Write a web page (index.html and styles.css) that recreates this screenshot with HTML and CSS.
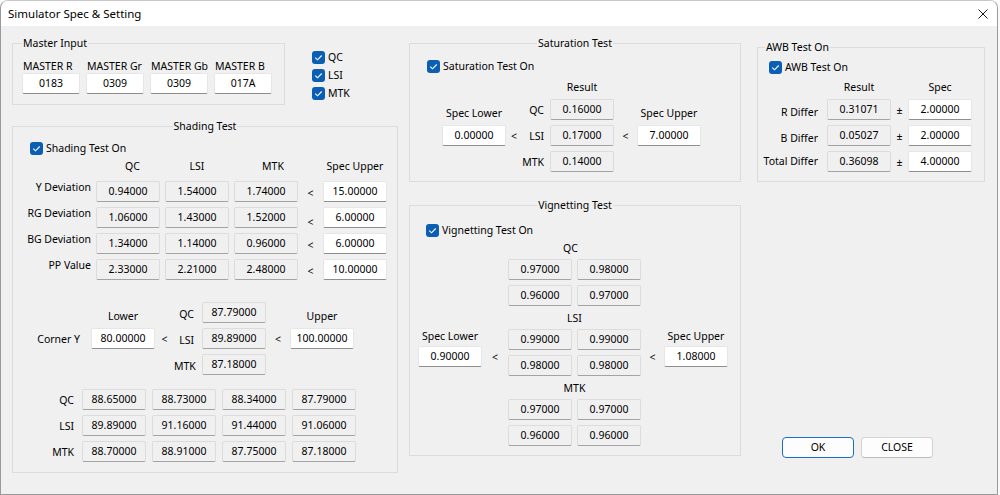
FILE: index.html
```html
<!DOCTYPE html>
<html>
<head>
<meta charset="utf-8">
<title>Simulator Spec &amp; Setting</title>
<link rel="stylesheet" href="styles.css">
</head>
<body>
<div class="window">
  <div class="titlebar">
    <span class="title">Simulator Spec &amp; Setting</span>
    <svg class="close" width="10" height="10" viewBox="0 0 10 10"><path d="M0.5 0.5 L9.5 9.5 M9.5 0.5 L0.5 9.5" stroke="#1b1b1b" stroke-width="1" fill="none"/></svg>
  </div>
  <div class="main">
    <div class="col-left">
      <div class="top-row">
        <fieldset class="group master">
          <legend>Master Input</legend>
          <div class="master-grid">
            <div class="mcol"><span class="mlabel">MASTER R</span><div class="fld edit">0183</div></div>
            <div class="mcol"><span class="mlabel">MASTER Gr</span><div class="fld edit">0309</div></div>
            <div class="mcol"><span class="mlabel">MASTER Gb</span><div class="fld edit">0309</div></div>
            <div class="mcol"><span class="mlabel">MASTER B</span><div class="fld edit">017A</div></div>
          </div>
        </fieldset>
        <div class="checks">
          <label class="chk"><svg class="cb" width="13" height="13" viewBox="0 0 13 13"><rect width="13" height="13" rx="3" fill="#0a5fb4"/><path d="M3.3 6.7 L5.5 8.8 L9.7 4.5" fill="none" stroke="#fff" stroke-width="1.1"/></svg><span>QC</span></label>
          <label class="chk"><svg class="cb" width="13" height="13" viewBox="0 0 13 13"><rect width="13" height="13" rx="3" fill="#0a5fb4"/><path d="M3.3 6.7 L5.5 8.8 L9.7 4.5" fill="none" stroke="#fff" stroke-width="1.1"/></svg><span>LSI</span></label>
          <label class="chk"><svg class="cb" width="13" height="13" viewBox="0 0 13 13"><rect width="13" height="13" rx="3" fill="#0a5fb4"/><path d="M3.3 6.7 L5.5 8.8 L9.7 4.5" fill="none" stroke="#fff" stroke-width="1.1"/></svg><span>MTK</span></label>
        </div>
      </div>

      <fieldset class="group shading">
        <legend class="center">Shading Test</legend>
        <label class="chk"><svg class="cb" width="13" height="13" viewBox="0 0 13 13"><rect width="13" height="13" rx="3" fill="#0a5fb4"/><path d="M3.3 6.7 L5.5 8.8 L9.7 4.5" fill="none" stroke="#fff" stroke-width="1.1"/></svg><span>Shading Test On</span></label>
        <div class="sh-grid">
          <div></div><div class="hd hd-qc">QC</div><div class="hd">LSI</div><div class="hd hd-mtk">MTK</div><div></div><div class="hd">Spec Upper</div>
          <div class="rl">Y Deviation</div><div class="fld ro">0.94000</div><div class="fld ro">1.54000</div><div class="fld ro">1.74000</div><div class="lt">&lt;</div><div class="fld edit">15.00000</div>
          <div class="rl">RG Deviation</div><div class="fld ro">1.06000</div><div class="fld ro">1.43000</div><div class="fld ro">1.52000</div><div class="lt low">&lt;</div><div class="fld edit">6.00000</div>
          <div class="rl">BG Deviation</div><div class="fld ro">1.34000</div><div class="fld ro">1.14000</div><div class="fld ro">0.96000</div><div class="lt">&lt;</div><div class="fld edit">6.00000</div>
          <div class="rl">PP Value</div><div class="fld ro">2.33000</div><div class="fld ro">2.21000</div><div class="fld ro">2.48000</div><div class="lt">&lt;</div><div class="fld edit">10.00000</div>
        </div>
        <div class="corner-grid">
          <div></div><div class="hd end">Lower</div><div></div><div class="cl">QC</div><div class="fld ro">87.79000</div><div></div><div class="hd end">Upper</div>
          <div class="rl-c">Corner Y</div><div class="fld edit">80.00000</div><div class="lt-c">&lt;</div><div class="cl">LSI</div><div class="fld ro">89.89000</div><div class="lt-c">&lt;</div><div class="fld edit">100.00000</div>
          <div></div><div></div><div></div><div class="cl">MTK</div><div class="fld ro">87.18000</div><div></div><div></div>
        </div>
        <div class="cy-grid">
          <div class="rl">QC</div><div class="fld ro">88.65000</div><div class="fld ro">88.73000</div><div class="fld ro">88.34000</div><div class="fld ro">87.79000</div>
          <div class="rl">LSI</div><div class="fld ro">89.89000</div><div class="fld ro">91.16000</div><div class="fld ro">91.44000</div><div class="fld ro">91.06000</div>
          <div class="rl">MTK</div><div class="fld ro">88.70000</div><div class="fld ro">88.91000</div><div class="fld ro">87.75000</div><div class="fld ro">87.18000</div>
        </div>
      </fieldset>
    </div>

    <div class="col-mid">
      <fieldset class="group sat">
        <legend class="center">Saturation Test</legend>
        <label class="chk"><svg class="cb" width="13" height="13" viewBox="0 0 13 13"><rect width="13" height="13" rx="3" fill="#0a5fb4"/><path d="M3.3 6.7 L5.5 8.8 L9.7 4.5" fill="none" stroke="#fff" stroke-width="1.1"/></svg><span>Saturation Test On</span></label>
        <div class="sat-grid">
          <div></div><div></div><div></div><div class="hd">Result</div><div></div><div></div>
          <div class="hd end">Spec Lower</div><div></div><div class="cl2">QC</div><div class="fld ro">0.16000</div><div></div><div class="hd end">Spec Upper</div>
          <div class="fld edit">0.00000</div><div class="lt-c">&lt;</div><div class="cl2">LSI</div><div class="fld ro">0.17000</div><div class="lt-c">&lt;</div><div class="fld edit">7.00000</div>
          <div></div><div></div><div class="cl2">MTK</div><div class="fld ro">0.14000</div><div></div><div></div>
        </div>
      </fieldset>

      <fieldset class="group vig">
        <legend class="center">Vignetting Test</legend>
        <label class="chk"><svg class="cb" width="13" height="13" viewBox="0 0 13 13"><rect width="13" height="13" rx="3" fill="#0a5fb4"/><path d="M3.3 6.7 L5.5 8.8 L9.7 4.5" fill="none" stroke="#fff" stroke-width="1.1"/></svg><span>Vignetting Test On</span></label>
        <div class="vig-body">
          <div class="side">
            <div class="hd">Spec Lower</div>
            <div class="fld edit">0.90000</div>
          </div>
          <div class="vlt">&lt;</div>
          <div class="vcenter">
            <div class="vgroup">
              <div class="hd vqc">QC</div>
              <div class="vpair"><div class="fld ro">0.97000</div><div class="fld ro">0.98000</div><div class="fld ro">0.96000</div><div class="fld ro">0.97000</div></div>
            </div>
            <div class="vgroup">
              <div class="hd">LSI</div>
              <div class="vpair"><div class="fld ro">0.99000</div><div class="fld ro">0.99000</div><div class="fld ro">0.98000</div><div class="fld ro">0.98000</div></div>
            </div>
            <div class="vgroup">
              <div class="hd">MTK</div>
              <div class="vpair"><div class="fld ro">0.97000</div><div class="fld ro">0.97000</div><div class="fld ro">0.96000</div><div class="fld ro">0.96000</div></div>
            </div>
          </div>
          <div class="vlt r">&lt;</div>
          <div class="side">
            <div class="hd">Spec Upper</div>
            <div class="fld edit">1.08000</div>
          </div>
        </div>
      </fieldset>
    </div>

    <div class="col-right">
      <fieldset class="group awb">
        <legend>AWB Test On</legend>
        <label class="chk"><svg class="cb" width="13" height="13" viewBox="0 0 13 13"><rect width="13" height="13" rx="3" fill="#0a5fb4"/><path d="M3.3 6.7 L5.5 8.8 L9.7 4.5" fill="none" stroke="#fff" stroke-width="1.1"/></svg><span>AWB Test On</span></label>
        <div class="awb-grid">
          <div></div><div class="hd">Result</div><div></div><div class="hd">Spec</div>
          <div class="al">R Differ</div><div class="fld ro">0.31071</div><div class="pm">±</div><div class="fld edit">2.00000</div>
          <div class="al">B Differ</div><div class="fld ro">0.05027</div><div class="pm">±</div><div class="fld edit">2.00000</div>
          <div class="al t">Total Differ</div><div class="fld ro">0.36098</div><div class="pm">±</div><div class="fld edit">4.00000</div>
        </div>
      </fieldset>
      <div class="buttons">
        <button class="btn def" type="button">OK</button>
        <button class="btn" type="button">CLOSE</button>
      </div>
    </div>
  </div>
</div>
</body>
</html>
```

FILE: styles.css
```css
* { box-sizing: border-box; }
html, body { margin: 0; padding: 0; }
body {
  background: #fafafa;
  font-family: "Noto Sans", "Liberation Sans", sans-serif;
  font-size: 10.5px;
  line-height: 14px;
  color: #000;
}
.window {
  width: 998px;
  height: 495px;
  background: #f0f0f0;
  border: 1px solid #9a9a9a;
  border-top-color: #c8c8c8;
  border-radius: 8px 8px 0 0;
  overflow: hidden;
  display: flex;
  flex-direction: column;
}
.titlebar {
  height: 25px;
  flex: none;
  background: #fff;
  display: flex;
  align-items: center;
  justify-content: space-between;
  padding: 0 9px 0 7px;
}
.title { font-size: 11.5px; }
.close { display: block; }

.main { display: flex; align-items: flex-start; padding-left: 11px; }
.col-left { width: 386px; margin-right: 11px; display: flex; flex-direction: column; }
.col-mid { width: 332px; margin-right: 16px; display: flex; flex-direction: column; }
.col-right { width: 228px; display: flex; flex-direction: column; }

.group { margin: 0; padding: 0; border: 1px solid #dcdcdc; min-width: 0; }
.group legend { padding: 0 1px; line-height: 15px; height: 15px; white-space: nowrap; }
.group legend.center { margin: 0 auto; }

.chk { display: flex; align-items: center; gap: 3px; height: 16px; white-space: nowrap; }
.cb { display: block; flex: none; }

.fld {
  width: 64px;
  height: 21px;
  border: 1px solid #dcdcdc;
  border-bottom-color: #a3a3a3;
  border-radius: 2px;
  text-align: center;
  line-height: 19px;
  white-space: nowrap;
}
.fld.ro { background: #f0f0f0; }
.fld.edit { background: #fff; border-color: #e6e6e6; border-bottom-color: #8e8e8e; }

.hd { text-align: center; white-space: nowrap; }
.hd.end { align-self: end; }

/* Master input */
.top-row { display: flex; align-items: flex-start; margin-top: 10px; }
.master { width: 273px; padding: 8px 11px 10px 9px; }
.master-grid { display: flex; gap: 6px; }
.mcol { width: 58px; display: flex; flex-direction: column; }
.mcol .fld { width: 58px; }
.mlabel { padding-left: 1px; white-space: nowrap; }
.checks { display: flex; flex-direction: column; margin: 12px 0 0 27px; }
.checks .chk { height: 18px; }

/* Shading */
.shading { width: 386px; margin-top: 14px; padding: 6px 0 10px 0; }
.shading > .chk { padding-left: 17px; }
.sh-grid {
  display: grid;
  grid-template-columns: 78px 64px 64px 64px 15px 64px;
  grid-template-rows: 17px repeat(4, 21px);
  gap: 5px;
  margin-top: 3px;
}
.hd-qc { padding-left: 9px; }
.hd-mtk { padding-left: 14px; }
.rl { text-align: right; white-space: nowrap; line-height: 13px; }
.lt { text-align: center; align-self: start; margin-top: 5px; }
.lt.low { margin-top: 8px; }

.corner-grid {
  display: grid;
  grid-template-columns: 78px 64px 19px 28px 64px 24px 64px;
  grid-template-rows: repeat(3, 21px);
  row-gap: 5px;
  margin-top: 22px;
}
.rl-c { text-align: right; padding-right: 11px; align-self: center; white-space: nowrap; }
.lt-c { text-align: center; align-self: center; }
.cl { text-align: right; padding-right: 8px; align-self: center; padding-top: 2px; }

.cy-grid {
  display: grid;
  grid-template-columns: 63px repeat(4, 64px);
  grid-auto-rows: 21px;
  gap: 5px 6px;
  margin-top: 14px;
}
.cy-grid .rl { padding-right: 2px; align-self: center; line-height: 14px; }

/* Saturation */
.sat { width: 332px; margin-top: 10px; padding: 7px 0 9px 0; }
.sat > .chk { padding-left: 17px; }
.sat-grid {
  display: grid;
  grid-template-columns: 64px 16px 28px 64px 23px 64px;
  grid-template-rows: 14px repeat(3, 21px);
  row-gap: 5px;
  margin: 6px 0 0 32px;
}
.cl2 { text-align: right; padding-right: 6px; align-self: center; }

/* Vignetting */
.vig { width: 332px; margin-top: 16px; padding: 9px 0 9px 0; }
.vig > .chk { padding-left: 16px; }
.vig-body { display: flex; align-items: flex-start; margin: 3px 0 0 8px; }
.side { width: 64px; margin-top: 88px; display: flex; flex-direction: column; gap: 3px; }
.vlt { width: 26px; text-align: center; margin-top: 109px; }
.vlt.r { width: 23px; }
.vcenter { width: 133px; display: flex; flex-direction: column; gap: 5px; }
.vgroup .hd { margin-bottom: 4px; }
.vqc { padding-right: 8px; }
.vpair { display: grid; grid-template-columns: 64px 64px; gap: 5px; }

/* AWB */
.awb { width: 228px; margin-top: 14px; padding: 4px 0 9px 0; }
.awb legend { margin-left: 7px; }
.awb > .chk { padding-left: 11px; }
.awb-grid {
  display: grid;
  grid-template-columns: 69px 64px 17px 64px;
  grid-template-rows: 14px repeat(3, 21px);
  row-gap: 5px;
  margin-top: 5px;
}
.al { text-align: right; padding-right: 9px; padding-top: 6px; white-space: nowrap; }
.al.t { padding-top: 3px; }
.pm { text-align: center; align-self: center; }

/* Buttons */
.buttons { display: flex; gap: 7px; margin: 255px 0 0 25px; }
.btn {
  width: 72px;
  height: 21px;
  padding: 0;
  margin: 0;
  border: 1px solid #d3d3d3;
  border-bottom-color: #bcbcbc;
  border-radius: 4px;
  background: #fdfdfd;
  font-family: inherit;
  font-size: 10.5px;
  line-height: 19px;
  color: #000;
  text-align: center;
}
.btn.def { border-color: #1a6fc4; }
```
